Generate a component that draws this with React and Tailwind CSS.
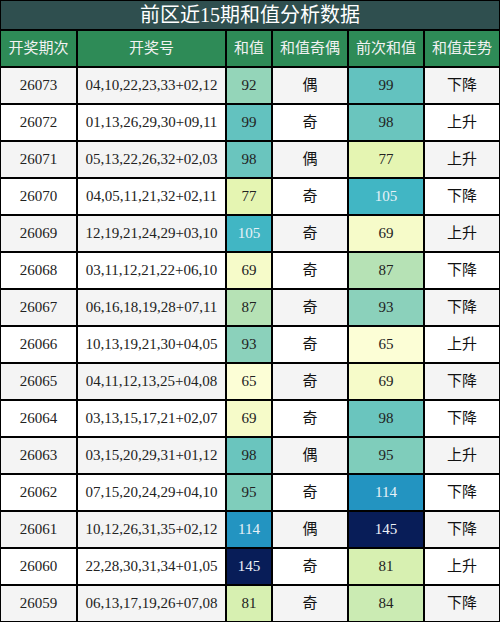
const rows = [
  ["26073", "04,10,22,23,33+02,12", 92, "偶", 99, "下降"],
  ["26072", "01,13,26,29,30+09,11", 99, "奇", 98, "上升"],
  ["26071", "05,13,22,26,32+02,03", 98, "偶", 77, "上升"],
  ["26070", "04,05,11,21,32+02,11", 77, "奇", 105, "下降"],
  ["26069", "12,19,21,24,29+03,10", 105, "奇", 69, "上升"],
  ["26068", "03,11,12,21,22+06,10", 69, "奇", 87, "下降"],
  ["26067", "06,16,18,19,28+07,11", 87, "奇", 93, "下降"],
  ["26066", "10,13,19,21,30+04,05", 93, "奇", 65, "上升"],
  ["26065", "04,11,12,13,25+04,08", 65, "奇", 69, "下降"],
  ["26064", "03,13,15,17,21+02,07", 69, "奇", 98, "下降"],
  ["26063", "03,15,20,29,31+01,12", 98, "偶", 95, "上升"],
  ["26062", "07,15,20,24,29+04,10", 95, "奇", 114, "下降"],
  ["26061", "10,12,26,31,35+02,12", 114, "偶", 145, "下降"],
  ["26060", "22,28,30,31,34+01,05", 145, "奇", 81, "上升"],
  ["26059", "06,13,17,19,26+07,08", 81, "奇", 84, "下降"],
];

// heat colours for the sum columns
const heat = {
  65: "bg-[#fcfed6] text-[#222]",
  69: "bg-[#f6fbc9] text-[#222]",
  77: "bg-[#e5f5b2] text-[#222]",
  81: "bg-[#d7f0b1] text-[#222]",
  84: "bg-[#cbebb3] text-[#222]",
  87: "bg-[#b6e2b5] text-[#222]",
  92: "bg-[#94d5b9] text-[#222]",
  93: "bg-[#8bd1bb] text-[#222]",
  95: "bg-[#7fcdbb] text-[#222]",
  98: "bg-[#6ac5be] text-[#222]",
  99: "bg-[#63c2bf] text-[#222]",
  105: "bg-[#41b6c4] text-[#e8f2f8]",
  114: "bg-[#2394c1] text-[#e8f2f8]",
  145: "bg-[#081d58] text-[#eef2f8]",
};

const headers = ["开奖期次", "开奖号", "和值", "和值奇偶", "前次和值", "和值走势"];

export default function App() {
  return (
    <div
      className="w-[500px] h-[622px] bg-black p-[1px] flex flex-col gap-[2px]"
      style={{ fontFamily: '"Liberation Serif", "Noto Sans CJK SC", serif' }}
    >
      <div className="h-[28px] bg-[#2f4f4f] text-white text-[20px] flex items-center justify-center leading-none">
        前区近15期和值分析数据
      </div>
      <div className="grid grid-cols-[75px_147px_44px_74px_74px_74px] auto-rows-[35px] gap-[2px]">
        {headers.map((h) => (
          <div key={h} className="bg-[#2e8b57] text-[#f2f2f2] text-[15px] flex items-center justify-center">
            {h}
          </div>
        ))}
        {rows.map((r, i) => {
          const bg = i % 2 === 0 ? "bg-[#f4f4f4]" : "bg-white";
          return [
            <div key={r[0] + "a"} className={`${bg} text-[15px] text-[#222] flex items-center justify-center`}>{r[0]}</div>,
            <div key={r[0] + "b"} className={`${bg} text-[15px] text-[#222] flex items-center justify-center`}>{r[1]}</div>,
            <div key={r[0] + "c"} className={`${heat[r[2]]} text-[15px] flex items-center justify-center`}>{r[2]}</div>,
            <div key={r[0] + "d"} className={`${bg} text-[15px] text-[#111] flex items-center justify-center`}>{r[3]}</div>,
            <div key={r[0] + "e"} className={`${heat[r[4]]} text-[15px] flex items-center justify-center`}>{r[4]}</div>,
            <div key={r[0] + "f"} className={`${bg} text-[15px] text-[#111] flex items-center justify-center`}>{r[5]}</div>,
          ];
        })}
      </div>
    </div>
  );
}
